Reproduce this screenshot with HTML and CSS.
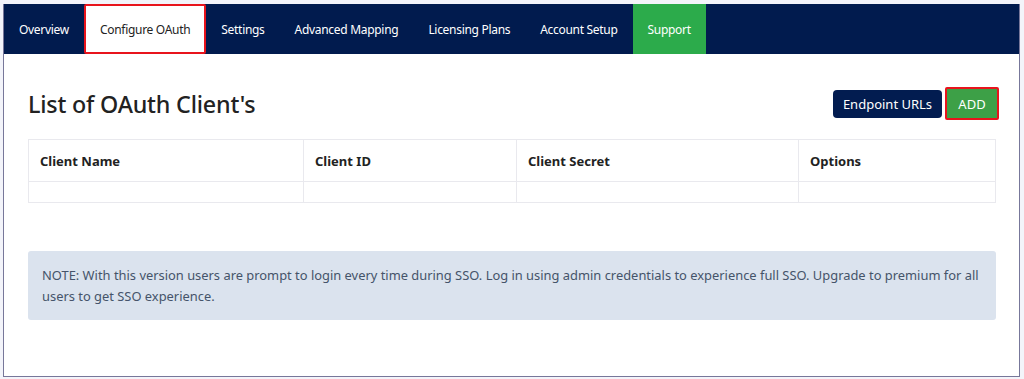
FILE: index.html
```html
<!DOCTYPE html>
<html>
<head>
    <meta charset="UTF-8">
    <meta name="viewport" content="width=device-width, initial-scale=1.0">
    <title>Configure OAuth</title>
    <link rel="stylesheet" href="styles.css">
</head>
<body>
    <div class="frame">
        <div class="nav">
            <a class="nav__tab">Overview</a>
            <a class="nav__tab nav__tab--active">Configure OAuth</a>
            <a class="nav__tab">Settings</a>
            <a class="nav__tab">Advanced Mapping</a>
            <a class="nav__tab">Licensing Plans</a>
            <a class="nav__tab">Account Setup</a>
            <a class="nav__tab nav__tab--support">Support</a>
        </div>
        <div class="content">
            <div class="content__head">
                <h1 class="title">List of OAuth Client's</h1>
                <div class="actions">
                    <button class="btn btn--navy">Endpoint URLs</button>
                    <button class="btn btn--green">ADD</button>
                </div>
            </div>
            <table class="clients">
                <tr>
                    <th class="col-name">Client Name</th>
                    <th class="col-id">Client ID</th>
                    <th class="col-secret">Client Secret</th>
                    <th>Options</th>
                </tr>
                <tr>
                    <td></td>
                    <td></td>
                    <td></td>
                    <td></td>
                </tr>
            </table>
            <div class="note">
                NOTE: With this version users are prompt to login every time during SSO. Log in using admin credentials to experience full SSO. Upgrade to premium for all users to get SSO experience.
            </div>
        </div>
    </div>
</body>
</html>
```

FILE: styles.css
```css
*, *::before, *::after {
    box-sizing: border-box;
    font-family: 'Noto Sans', sans-serif;
}
body {
    margin: 0;
    padding: 4px 4px 0 3px;
    background-color: #f3f4fa;
}
.frame {
    height: 373px;
    background-color: #fff;
    border-left: 1px solid #77779a;
    border-right: 1px solid #77779a;
    border-bottom: 1px solid #77779a;
}
.nav {
    display: flex;
    height: 50px;
    background-color: #011b4e;
}
.nav__tab {
    display: flex;
    align-items: center;
    padding: 0 15px;
    color: #fff;
    font-size: 12px;
    letter-spacing: -0.3px;
}
.nav__tab--active {
    background-color: #fff;
    color: #222;
    border: 2px solid #e8141c;
    border-radius: 2px;
    padding: 0 14px;
}
.nav__tab--support {
    background-color: #2cab4b;
}
.content {
    padding: 0 23px 0 24px;
}
.content__head {
    display: flex;
    align-items: center;
    justify-content: space-between;
    height: 85px;
    padding-top: 14px;
}
.title {
    margin: 0;
    font-size: 23.3px;
    font-weight: 500;
    color: #222;
    letter-spacing: -0.2px;
}
.actions {
    display: flex;
    align-items: center;
    gap: 3px;
    margin-right: -3px;
}
.btn {
    border: none;
    color: #fff;
    font-size: 13px;
    border-radius: 4px;
    cursor: pointer;
}
.btn--navy {
    background-color: #021c50;
    height: 28px;
    width: 109px;
}
.btn--green {
    background-color: #3da047;
    border: 2px solid #e8141c;
    border-radius: 2px;
    height: 33px;
    width: 54px;
}
.clients {
    width: 100%;
    border-collapse: collapse;
    border: 1px solid #e9e9ee;
}
.clients th, .clients td {
    border: 1px solid #e9e9ee;
    text-align: left;
    padding: 0 11px;
}
.clients th {
    height: 42px;
    font-size: 13px;
    font-weight: 700;
    color: #222;
}
.clients td {
    height: 21px;
}
.col-name {
    width: 275px;
}
.col-id {
    width: 213px;
}
.col-secret {
    width: 282px;
}
.note {
    margin-top: 48px;
    padding: 14px 10px 13px 14px;
    background-color: #dbe3ee;
    border-radius: 3px;
    color: #45546a;
    font-size: 12.9px;
    line-height: 21px;
}
```
